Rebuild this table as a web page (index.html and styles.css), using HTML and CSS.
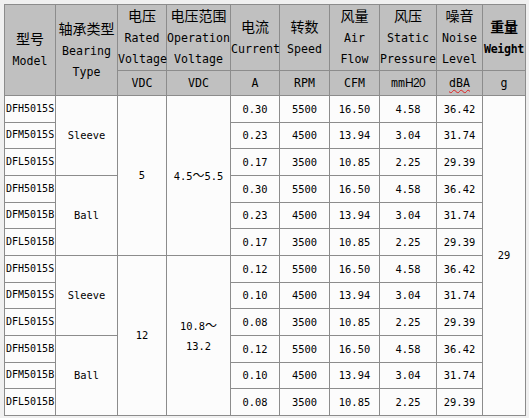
FILE: index.html
```html
<!DOCTYPE html>
<html lang="zh">
<head>
<meta charset="utf-8">
<title>Fan specifications</title>
<link rel="stylesheet" href="styles.css">
</head>
<body>
<table class="spec">
  <colgroup>
    <col class="c-model"><col class="c-bearing"><col class="c-rated"><col class="c-op"><col class="c-cur">
    <col class="c-speed"><col class="c-air"><col class="c-static"><col class="c-noise"><col class="c-weight">
  </colgroup>
  <thead>
    <tr class="h1">
      <th rowspan="2"><span class="zh">型号</span><br>Model</th>
      <th rowspan="2"><span class="zh">轴承类型</span><br>Bearing<br>Type</th>
      <th><span class="zh">电压</span><br>Rated<br>Voltage</th>
      <th><span class="zh">电压范围</span><br>Operation<br>Voltage</th>
      <th><span class="zh">电流</span><br>Current</th>
      <th><span class="zh">转数</span><br>Speed</th>
      <th><span class="zh">风量</span><br>Air<br>Flow</th>
      <th><span class="zh">风压</span><br>Static<br>Pressure</th>
      <th><span class="zh">噪音</span><br>Noise<br>Level</th>
      <th class="bold"><span class="zh">重量</span><br>Weight</th>
    </tr>
    <tr class="h2">
      <th>VDC</th><th>VDC</th><th>A</th><th>RPM</th><th>CFM</th>
      <th>mm<span class="sans">H20</span></th>
      <th><span class="spell">dBA</span></th>
      <th>g</th>
    </tr>
  </thead>
  <tbody>
    <tr>
      <td class="model">DFH5015S</td>
      <td rowspan="3">Sleeve</td>
      <td rowspan="6">5</td>
      <td rowspan="6">4.5<span class="zh-s">～</span>5.5</td>
      <td>0.30</td><td>5500</td><td>16.50</td><td>4.58</td><td>36.42</td>
      <td rowspan="12">29</td>
    </tr>
    <tr><td class="model">DFM5015S</td><td>0.23</td><td>4500</td><td>13.94</td><td>3.04</td><td>31.74</td></tr>
    <tr><td class="model">DFL5015S</td><td>0.17</td><td>3500</td><td>10.85</td><td>2.25</td><td>29.39</td></tr>
    <tr>
      <td class="model">DFH5015B</td>
      <td rowspan="3">Ball</td>
      <td>0.30</td><td>5500</td><td>16.50</td><td>4.58</td><td>36.42</td>
    </tr>
    <tr><td class="model">DFM5015B</td><td>0.23</td><td>4500</td><td>13.94</td><td>3.04</td><td>31.74</td></tr>
    <tr><td class="model">DFL5015B</td><td>0.17</td><td>3500</td><td>10.85</td><td>2.25</td><td>29.39</td></tr>
    <tr>
      <td class="model">DFH5015S</td>
      <td rowspan="3">Sleeve</td>
      <td rowspan="6">12</td>
      <td rowspan="6">10.8<span class="zh-s">～</span><br>13.2</td>
      <td>0.12</td><td>5500</td><td>16.50</td><td>4.58</td><td>36.42</td>
    </tr>
    <tr><td class="model">DFM5015S</td><td>0.10</td><td>4500</td><td>13.94</td><td>3.04</td><td>31.74</td></tr>
    <tr><td class="model">DFL5015S</td><td>0.08</td><td>3500</td><td>10.85</td><td>2.25</td><td>29.39</td></tr>
    <tr>
      <td class="model">DFH5015B</td>
      <td rowspan="3">Ball</td>
      <td>0.12</td><td>5500</td><td>16.50</td><td>4.58</td><td>36.42</td>
    </tr>
    <tr><td class="model">DFM5015B</td><td>0.10</td><td>4500</td><td>13.94</td><td>3.04</td><td>31.74</td></tr>
    <tr><td class="model">DFL5015B</td><td>0.08</td><td>3500</td><td>10.85</td><td>2.25</td><td>29.39</td></tr>
  </tbody>
</table>
</body>
</html>
```
FILE: styles.css
```css
html, body {
  margin: 0;
  background: #f0f0f0;
}
body {
  padding: 4px;
}
.spec {
  border-collapse: collapse;
  table-layout: fixed;
  width: 521px;
  font-family: "DejaVu Sans Mono", "Noto Sans CJK SC", monospace;
  color: #000;
}
.c-model { width: 51px; }
.c-bearing { width: 62px; }
.c-rated { width: 49px; }
.c-op { width: 64px; }
.c-cur { width: 49px; }
.c-speed { width: 50px; }
.c-air { width: 50px; }
.c-static { width: 57px; }
.c-noise { width: 46px; }
.c-weight { width: 43px; }

.spec th,
.spec td {
  border: 1px solid #8c8c8c;
  padding: 0;
  text-align: center;
  vertical-align: middle;
  white-space: nowrap;
  overflow: visible;
}
.spec th {
  background: #c0c0c0;
  font-weight: normal;
  font-size: 11.6px;
  line-height: 21px;
}
.spec th.bold {
  font-weight: bold;
  letter-spacing: -0.3px;
}
.h1 { height: 65px; }
.h2 { height: 25px; }
.spec tbody tr { height: 26.667px; }
.spec td {
  background: #fcfcfc;
  font-size: 10.4px;
  line-height: 20px;
}
.spec td.model {
  font-size: 10px;
  text-align: left;
  padding-left: 1px;
}
.zh {
  font-family: "Noto Sans CJK SC", sans-serif;
  font-size: 14px;
}
.zh-s {
  font-family: "Noto Sans CJK SC", sans-serif;
  font-size: 12px;
}
.sans {
  font-family: "Liberation Sans", sans-serif;
  font-size: 12px;
  letter-spacing: -0.6px;
}
.spell {
  text-decoration: underline wavy #e02020;
  text-decoration-thickness: 1px;
  text-underline-offset: 2px;
}
```
